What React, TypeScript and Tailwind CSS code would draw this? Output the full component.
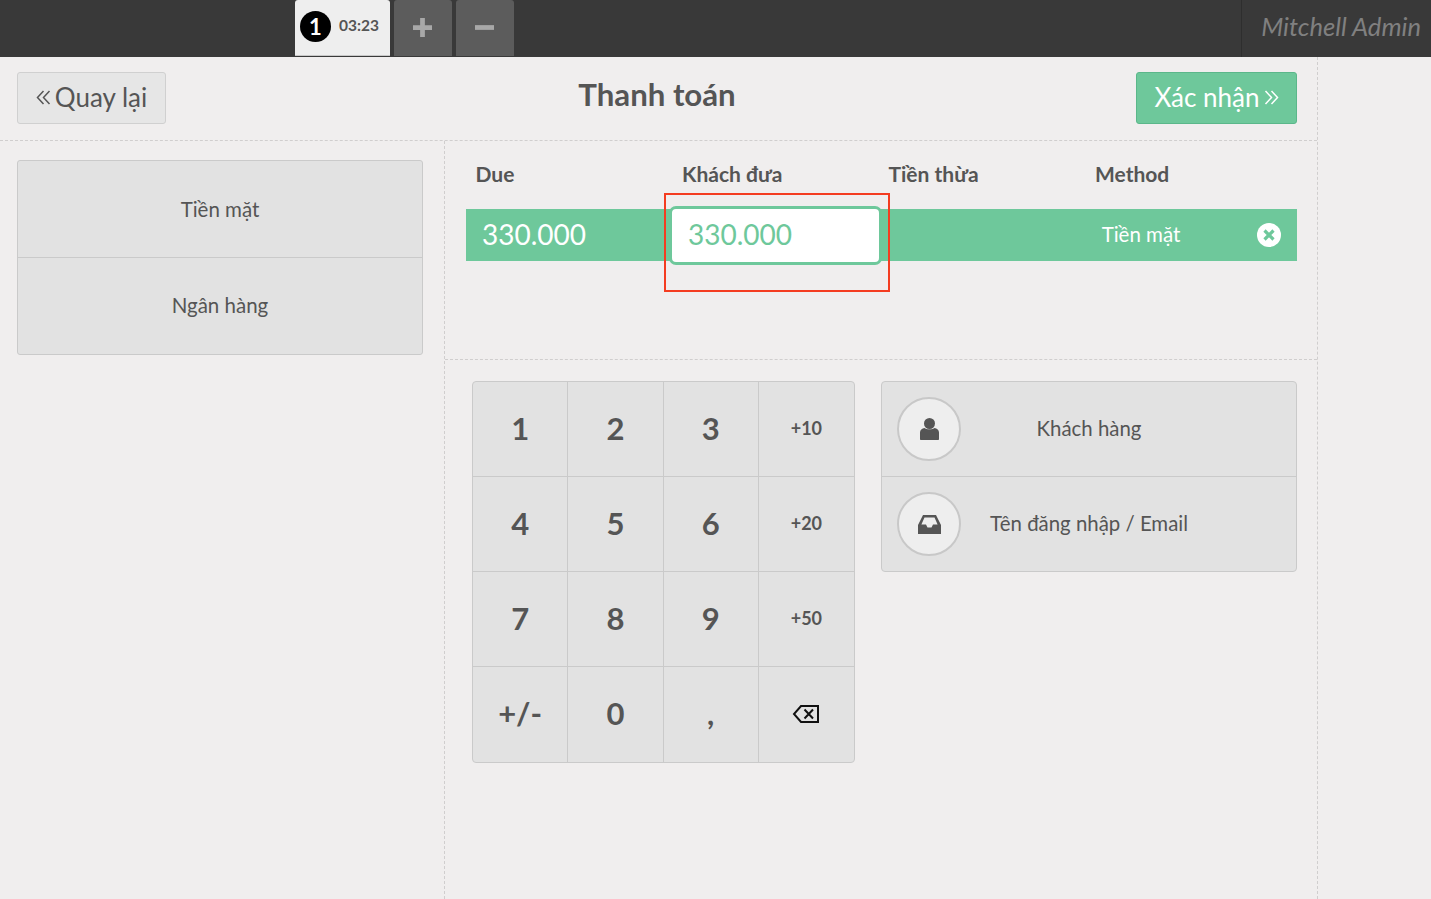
import React from 'react';

const KEYS = ['1', '2', '3', '+10', '4', '5', '6', '+20', '7', '8', '9', '+50', '+/-', '0', ','];

function Caret({ flip }: { flip?: boolean }) {
  return (
    <svg width="15" height="15" viewBox="0 0 15 15" fill="none" stroke="currentColor" strokeWidth="1.5" className={flip ? 'rotate-180' : ''}>
      <path d="M7.5 1 L1.5 7.5 L7.5 14 M13.5 1 L7.5 7.5 L13.5 14" />
    </svg>
  );
}

function Backspace() {
  return (
    <svg width="28" height="20" viewBox="0 0 28 20" fill="none" stroke="#111" strokeWidth="2">
      <path d="M9 2 H26 V18 H9 L2 10 Z" />
      <path d="M12.5 5.5 L21 14.5 M21 5.5 L12.5 14.5" />
    </svg>
  );
}

export default function App() {
  return (
    <div className="w-[1431px] h-[899px] overflow-hidden flex flex-col bg-[#f0eeee] text-[#555] font-['Lato','Noto_Sans',sans-serif]">
      {/* Header */}
      <div className="h-[57px] bg-[#393939] flex shrink-0">
        <div className="w-[295px]" />
        <div className="w-[95px] h-[56px] bg-[#eeeeee] border-b border-[#c8c8c8] rounded-t-[3px] flex items-center pl-[5px] gap-[8px] pb-[2px]">
          <span className="w-[31px] h-[31px] rounded-full bg-black text-white flex items-center justify-center text-[22px] font-bold">1</span>
          <span className="text-[15.5px] font-bold pb-[2px]">03:23</span>
        </div>
        <div className="w-[58px] h-[56px] ml-[4px] bg-[#5c5c5c] rounded-t-[3px] flex items-center justify-center text-[#a8a8a8] pb-[1px] pr-[1px]">
          <svg width="19" height="19" viewBox="0 0 20 20" fill="currentColor"><path d="M7.5 0 H12.5 V7.5 H20 V12.5 H12.5 V20 H7.5 V12.5 H0 V7.5 H7.5 Z" /></svg>
        </div>
        <div className="w-[58px] h-[56px] ml-[4px] bg-[#5c5c5c] rounded-t-[3px] flex items-center justify-center text-[#a8a8a8] pb-[1px] pr-[1px]">
          <svg width="19" height="19" viewBox="0 0 20 20" fill="currentColor"><rect x="0" y="7.5" width="20" height="5" /></svg>
        </div>
        <div className="flex-1" />
        <div className="w-[190px] border-l border-[#2e2e2e] flex items-center justify-end pr-[10px] pb-[4px] text-[#808080] italic text-[25.6px] leading-none">
          Mitchell Admin
        </div>
      </div>

      <div className="flex-1 flex min-h-0">
        <div className="w-[1318px] border-r border-dashed border-[#d0cece] flex flex-col">
          {/* Top bar */}
          <div className="h-[84px] shrink-0 border-b border-dashed border-[#d0cece] flex items-start justify-between pt-[15px] pl-[17px] pr-[20px]">
            <div className="w-[149px] h-[52px] bg-[#e6e6e6] border border-[#d0d0d0] rounded-[3px] flex items-center justify-center gap-[4px] text-[26px] leading-none pb-[2px]">
              <Caret />
              Quay lại
            </div>
            <div className="text-[31.2px] font-bold leading-none mt-[7px] ml-[12px]">Thanh toán</div>
            <div className="w-[161px] h-[52px] bg-[#6ec89b] border border-[#5bb78a] rounded-[3px] flex items-center justify-center gap-[4px] text-white text-[26px] leading-none pb-[2px]">
              Xác nhận
              <Caret flip />
            </div>
          </div>

          <div className="flex-1 flex min-h-0">
            {/* Payment methods */}
            <div className="w-[445px] shrink-0 border-r border-dashed border-[#d0cece] pt-[19px] pl-[17px] pr-[21px]">
              <div className="bg-[#e2e2e2] border border-[#cacaca] rounded-[3px] text-[20.5px]">
                <div className="h-[97px] flex items-center justify-center border-b border-[#cacaca]">Tiền mặt</div>
                <div className="h-[96px] flex items-center justify-center pb-[1px]">Ngân hàng</div>
              </div>
            </div>

            <div className="flex-1 flex flex-col min-w-0">
              {/* Payment lines */}
              <div className="h-[219px] shrink-0 border-b border-dashed border-[#d0cece] pl-[21px] pr-[20px]">
                <div className="h-[68px] grid grid-cols-[206.5px_206.5px_206.5px_1fr] items-center pl-[9.5px] text-[21px] font-bold">
                  <div className="mt-[-2px]">Due</div>
                  <div className="mt-[-2px]">Khách đưa</div>
                  <div className="mt-[-2px]">Tiền thừa</div>
                  <div className="mt-[-2px]">Method</div>
                </div>
                <div className="h-[52px] bg-[#6ec89b] text-white flex items-center relative">
                  <div className="w-[203px] pl-[16px] text-[28px] pb-[2px]">330.000</div>
                  <div className="w-[213px] h-[59px] shrink-0 bg-white border-[3px] border-[#6ec89b] rounded-[7px] text-[#6ec89b] text-[28px] flex items-center pl-[16px] pb-[2px]">330.000</div>
                  <div className="w-[219px]" />
                  <div className="w-[80px] text-center text-[20.5px] whitespace-nowrap pb-[2px]">Tiền mặt</div>
                  <svg className="absolute right-[16px] top-[14px]" width="24" height="24" viewBox="0 0 24 24">
                    <circle cx="12" cy="12" r="12" fill="#fff" />
                    <path d="M7.5 7.5 L16.5 16.5 M16.5 7.5 L7.5 16.5" stroke="#6ec89b" strokeWidth="3.2" />
                  </svg>
                  <div className="absolute left-[198px] top-[-16px] w-[226px] h-[99px] border-2 border-[#f43c20]" />
                </div>
              </div>

              {/* Numpad + customer */}
              <div className="flex-1 flex items-start pt-[21px] pl-[27px] pr-[20px] gap-[26px]">
                <div className="w-[383px] h-[382px] shrink-0 grid grid-cols-4 grid-rows-4 bg-[#e2e2e2] border border-[#cacaca] rounded-[4px] overflow-hidden">
                  {KEYS.map((k, i) => (
                    <div
                      key={k}
                      className={`flex items-center justify-center font-bold pb-[2px] ${k.startsWith('+') && k !== '+/-' ? 'text-[18px]' : 'text-[31px]'} ${i % 4 !== 3 ? 'border-r border-[#cacaca]' : ''} ${i < 12 ? 'border-b border-[#cacaca]' : ''}`}
                    >
                      {k}
                    </div>
                  ))}
                  <div className="flex items-center justify-center pb-[2px]"><Backspace /></div>
                </div>

                <div className="flex-1 h-[191px] bg-[#e2e2e2] border border-[#cacaca] rounded-[4px] text-[20.4px] flex flex-col">
                  <div className="h-[95px] border-b border-[#cacaca] flex items-center justify-center relative pb-[2px]">
                    <div className="absolute left-[15px] top-[15px] w-[64px] h-[64px] rounded-full border-2 border-[#c8c8c8] bg-[#eeeeee] flex items-center justify-center">
                      <svg width="19" height="22" viewBox="0 0 19 22" fill="#555">
                        <circle cx="9.5" cy="5.5" r="5.5" />
                        <path d="M0 21 V14.5 C0 12 2 10.5 4.5 10 C6 11.8 13 11.8 14.5 10 C17 10.5 19 12 19 14.5 V21 C19 21.6 18.6 22 18 22 H1 C.4 22 0 21.6 0 21 Z" />
                      </svg>
                    </div>
                    Khách hàng
                  </div>
                  <div className="flex-1 flex items-center justify-center relative pb-[2px]">
                    <div className="absolute left-[15px] top-[15px] w-[64px] h-[64px] rounded-full border-2 border-[#c8c8c8] bg-[#eeeeee] flex items-center justify-center">
                      <svg width="23" height="19" viewBox="0 0 23 19" fill="#555">
                        <path d="M5 0 H18 L23 10 V19 H0 V10 Z M6.5 2.5 L3.4 9.5 H8 L9.5 12.5 H13.5 L15 9.5 H19.6 L16.5 2.5 Z" fillRule="evenodd" />
                      </svg>
                    </div>
                    Tên đăng nhập / Email
                  </div>
                </div>
              </div>
            </div>
          </div>
        </div>
        <div className="flex-1" />
      </div>
    </div>
  );
}
